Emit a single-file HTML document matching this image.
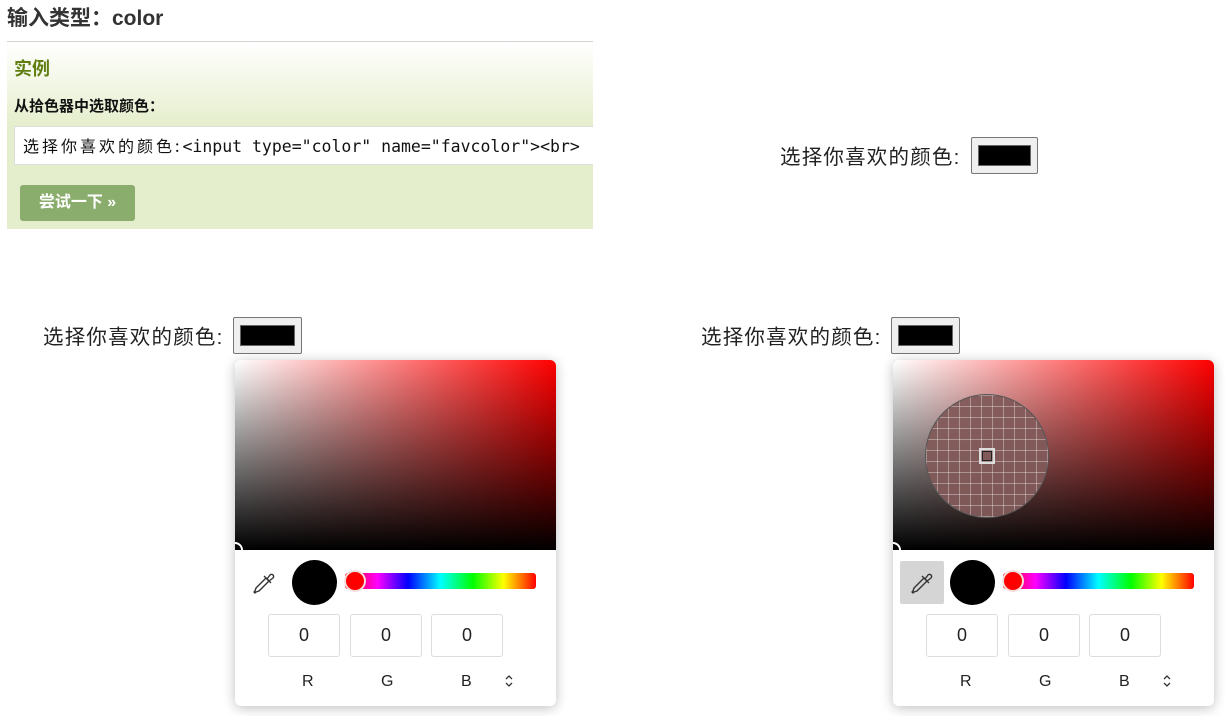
<!DOCTYPE html>
<html><head><meta charset="utf-8"><style>
body{margin:0;width:1225px;height:716px;background:#fff;position:relative;overflow:hidden;font-family:"Liberation Sans","Noto Sans CJK SC",sans-serif;color:#222}
.a{position:absolute}
.lab{font-size:20.5px;color:#222;white-space:nowrap;line-height:24px;letter-spacing:1.2px}
.sw{position:absolute;width:64px;height:34px;border:1px solid #767676;border-radius:2px;background:#efefef;box-sizing:border-box}
.sw i{position:absolute;left:6px;top:7px;right:6px;bottom:7px;background:#000;border:1px solid #666}
.pk{position:absolute;width:321px;height:346px;background:#fff;border-radius:6px;box-shadow:0 2px 12px rgba(0,0,0,.25);overflow:hidden}
.grad{position:absolute;left:0;top:0;width:321px;height:190px;background:linear-gradient(to bottom,rgba(0,0,0,0),#000),linear-gradient(to right,#fff,#f00)}
.dot{position:absolute;width:16px;height:16px;left:-8px;top:182px;border:2px solid #fff;border-radius:50%;box-sizing:border-box}
.blk{position:absolute;left:57px;top:200px;width:45px;height:45px;border-radius:50%;background:#000}
.hue{position:absolute;left:110px;top:213px;width:191px;height:16px;border-radius:3px;background:linear-gradient(to right,#f00,#f0f 17%,#00f 33%,#0ff 50%,#0f0 67%,#ff0 83%,#f00)}
.th{position:absolute;left:109px;top:210px;width:22px;height:22px;border-radius:50%;background:#f00;border:2px solid #f3dede;box-sizing:border-box}
.in{position:absolute;top:254px;width:72px;height:43px;border:1px solid #ddd;border-radius:3px;box-sizing:border-box;text-align:center;line-height:41px;font-size:18px;color:#222}
.rl{position:absolute;top:313px;font-size:16px;color:#222}
</style></head><body>
<div class="a" style="left:7px;top:2px;font-size:21px;font-weight:bold;color:#333">输入类型：color</div>
<div class="a" style="left:7px;top:41px;width:586px;height:187px;border-top:1px solid #d4d4d4;background:linear-gradient(to bottom,#fff,#e5eecc 45%,#e5eecc)"></div>
<div class="a" style="left:14px;top:55px;font-size:18px;font-weight:bold;color:#617f10">实例</div>
<div class="a" style="left:14px;top:95px;font-size:15px;font-weight:bold;color:#111">从拾色器中选取颜色：</div>
<div class="a" style="left:14px;top:126px;width:579px;height:39px;background:#fff;border:1px solid #ddd;border-right:none;box-sizing:border-box;font-family:'DejaVu Sans Mono','Liberation Mono',monospace;font-size:16.5px;line-height:37px;padding-left:8px;white-space:nowrap;overflow:hidden;color:#111"><span style="font-family:'Noto Sans CJK SC',sans-serif;font-size:16px;letter-spacing:3px">选择你喜欢的颜色:</span>&lt;input type="color" name="favcolor"&gt;&lt;br&gt;</div>
<div class="a" style="left:20px;top:185px;width:115px;height:36px;background:#8aac6c;border-radius:3px;color:#fff;font-weight:bold;font-size:16px;line-height:36px;text-align:center">尝试一下 »</div>

<div class="a lab" style="left:780px;top:146px">选择你喜欢的颜色:</div>
<div class="sw" style="left:971px;top:137px;width:67px;height:37px"><i></i></div>

<div class="a lab" style="left:43px;top:326px">选择你喜欢的颜色:</div>
<div class="sw" style="left:233px;top:317px;width:69px;height:37px"><i></i></div>
<div class="a lab" style="left:701px;top:326px">选择你喜欢的颜色:</div>
<div class="sw" style="left:891px;top:317px;width:69px;height:37px"><i></i></div>

<div class="pk" style="left:235px;top:360px">
<div class="grad"></div><div class="dot"></div>
<svg class="a" style="left:16px;top:210px" width="26" height="26" viewBox="0 0 26 26" fill="none" stroke="#333" stroke-width="1.4" stroke-linejoin="round"><path d="M15 8l3 3-10 10-3 1-1 1-1-1 1-1 1-3z"/><path d="M13 6l7 7M16 9l3-4a2 2 0 0 1 3 3l-4 3"/></svg>
<div class="blk"></div><div class="hue"></div><div class="th"></div>
<div class="in" style="left:33px">0</div><div class="in" style="left:115px">0</div><div class="in" style="left:196px">0</div>
<div class="rl" style="left:67px">R</div><div class="rl" style="left:146px">G</div><div class="rl" style="left:226px">B</div>
<svg class="a" style="left:270px;top:315px" width="8" height="12" viewBox="0 0 8 12" fill="none" stroke="#333" stroke-width="1.3"><path d="M1 4l3-3 3 3M1 8l3 3 3-3"/></svg>
</div>

<div class="pk" style="left:893px;top:360px">
<div class="grad"></div><div class="dot"></div>
<div class="a" style="left:32px;top:34px;width:124px;height:124px;border-radius:50%;background-color:rgba(130,90,90,.95);background-image:linear-gradient(rgba(255,255,255,.35) 1px,transparent 1px),linear-gradient(90deg,rgba(255,255,255,.35) 1px,transparent 1px);background-size:11px 11px;border:1px solid #555;box-sizing:border-box"></div>
<div class="a" style="left:86px;top:88px;width:16px;height:16px;border:2px solid #ddd;box-sizing:border-box;outline:1px solid #222;outline-offset:-4px"></div>
<div class="a" style="left:7px;top:201px;width:44px;height:43px;background:#d5d5d5;border-radius:2px"></div>
<svg class="a" style="left:16px;top:210px" width="26" height="26" viewBox="0 0 26 26" fill="none" stroke="#333" stroke-width="1.4" stroke-linejoin="round"><path d="M15 8l3 3-10 10-3 1-1 1-1-1 1-1 1-3z"/><path d="M13 6l7 7M16 9l3-4a2 2 0 0 1 3 3l-4 3"/></svg>
<div class="blk"></div><div class="hue"></div><div class="th"></div>
<div class="in" style="left:33px">0</div><div class="in" style="left:115px">0</div><div class="in" style="left:196px">0</div>
<div class="rl" style="left:67px">R</div><div class="rl" style="left:146px">G</div><div class="rl" style="left:226px">B</div>
<svg class="a" style="left:270px;top:315px" width="8" height="12" viewBox="0 0 8 12" fill="none" stroke="#333" stroke-width="1.3"><path d="M1 4l3-3 3 3M1 8l3 3 3-3"/></svg>
</div>
</body></html>
